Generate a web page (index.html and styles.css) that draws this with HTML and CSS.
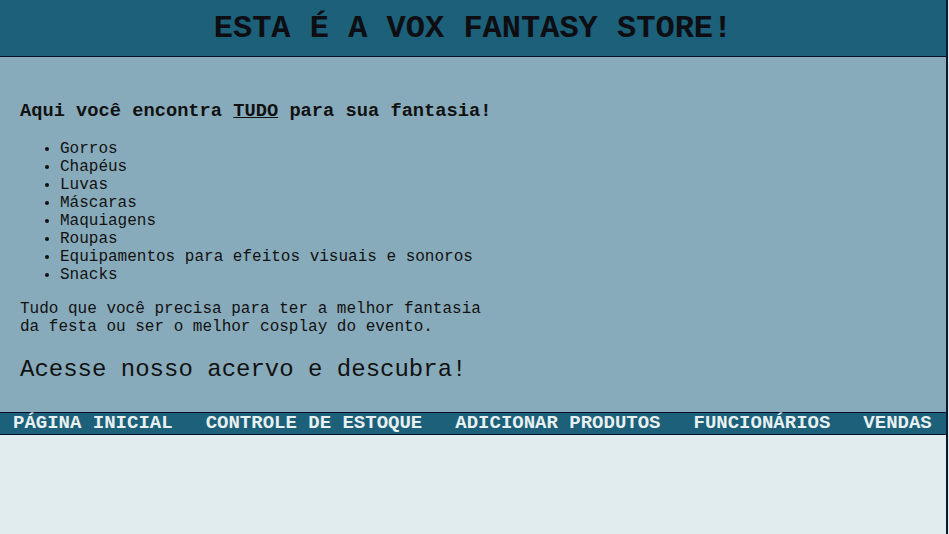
FILE: index.html
```html
<!DOCTYPE html>
<html lang="pt-BR">
<head>
<meta charset="utf-8">
<title>Vox Fantasy Store</title>
<link rel="stylesheet" href="styles.css">
</head>
<body>
<div class="page">
  <header class="top">
    <h1 class="title">ESTA É A VOX FANTASY STORE!</h1>
  </header>
  <main class="content">
    <h3 class="lead">Aqui você encontra <u>TUDO</u> para sua fantasia!</h3>
    <ul class="items">
      <li>Gorros</li>
      <li>Chapéus</li>
      <li>Luvas</li>
      <li>Máscaras</li>
      <li>Maquiagens</li>
      <li>Roupas</li>
      <li>Equipamentos para efeitos visuais e sonoros</li>
      <li>Snacks</li>
    </ul>
    <p class="desc">Tudo que você precisa para ter a melhor fantasia<br>da festa ou ser o melhor cosplay do evento.</p>
    <h2 class="cta">Acesse nosso acervo e descubra!</h2>
  </main>
  <nav class="menu">
    <a href="#">PÁGINA INICIAL</a>
    <a href="#">CONTROLE DE ESTOQUE</a>
    <a href="#">ADICIONAR PRODUTOS</a>
    <a href="#">FUNCIONÁRIOS</a>
    <a href="#">VENDAS</a>
  </nav>
  <div class="rest"></div>
</div>
</body>
</html>
```

FILE: styles.css
```css
html, body {
  margin: 0;
  padding: 0;
  height: 100%;
  background: #e0ecee;
}
body {
  font-family: "Liberation Mono", "Courier New", monospace;
  color: #111;
}
.page {
  min-height: 100%;
  border-right: 2px solid #0c1a2c;
  box-sizing: border-box;
  width: 948px;
  display: flex;
  flex-direction: column;
}
.top {
  background: #1c6079;
  height: 56px;
  border-bottom: 1px solid #0b0b2a;
  display: flex;
  align-items: center;
  justify-content: center;
}
.title {
  margin: 2px 0 0 0;
  font-size: 32px;
  font-weight: bold;
  color: #0d0d12;
  line-height: 36px;
}
.content {
  background: #88abbb;
  padding: 24px 20px 9px 20px;
  display: flow-root;
}
.lead {
  font-size: 18.72px;
  font-weight: bold;
  margin: 18.72px 0;
}
.items {
  margin: 16px 0;
  padding-left: 40px;
  font-size: 16px;
}
.desc {
  font-size: 16px;
  margin: 16px 0;
}
.cta {
  font-size: 24px;
  font-weight: normal;
  margin: 20px 0;
}
.menu {
  background: #1c6079;
  border-top: 1px solid #0b0b2a;
  border-bottom: 1px solid #0b0b2a;
  display: flex;
  gap: 33px;
  padding: 0 0 0 13px;
  height: 21px;
  align-items: center;
}
.menu a {
  color: #e8f0f1;
  text-decoration: none;
  font-weight: bold;
  font-size: 19px;
  line-height: 21px;
}
.rest {
  flex: 1;
  background: #e0ecee;
}
```
